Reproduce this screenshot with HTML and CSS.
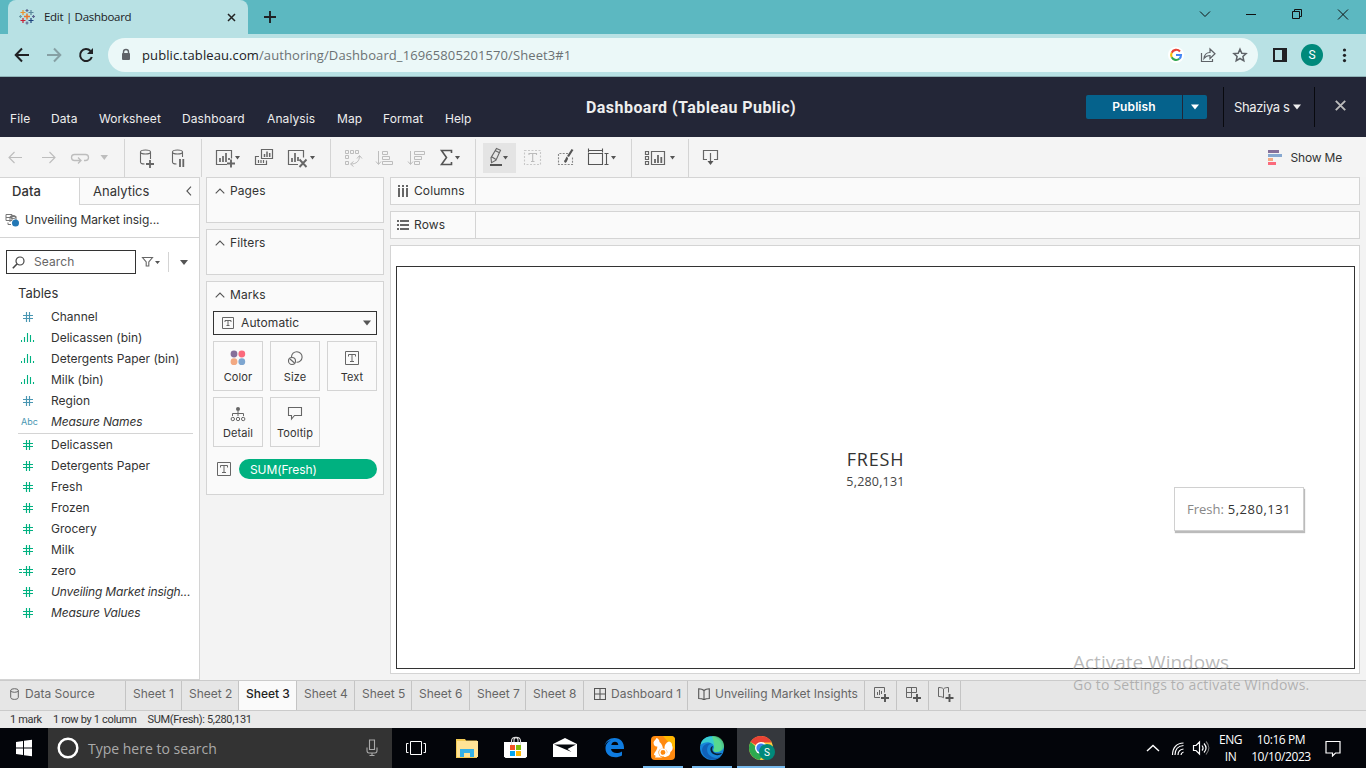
FILE: index.html
```html
<!DOCTYPE html>
<html lang="en">
<head>
<meta charset="utf-8">
<title>Edit | Dashboard</title>
<link rel="stylesheet" href="styles.css">
</head>
<body>
<svg class="defs" width="0" height="0">
  <symbol id="hash" viewBox="0 0 12 12"><path d="M4.500 1v10M7.500 1v10M1 4.500h10M1 7.500h10" fill="none" stroke="currentColor" stroke-width="1.150"/></symbol>
  <symbol id="bars" viewBox="0 0 14 10"><path d="M.5 7v2M3.500 4v5M6.500 0v9M9.500 2v7M12.500 7v2" fill="none" stroke="currentColor" stroke-width="1.100"/></symbol>
  <symbol id="boxt" viewBox="0 0 14 14"><path d="M.5.5h13v13H.5z" fill="none" stroke="#666"/><path d="M3.500 5.500v-2h7v2M7 3.500v7M5 10.500h4" fill="none" stroke="#666"/></symbol>
  <symbol id="chev" viewBox="0 0 10 6"><path d="M.7 5.300 5 1l4.300 4.300" fill="none" stroke="#555" stroke-width="1.100"/></symbol>
</svg>

<header class="browser">
  <div class="tabstrip">
    <div class="tab">
      <svg class="favicon" viewBox="20 9 16 16" width="16" height="16"><g fill="none" stroke-width="1.200"><path d="M28 13.500v6M25 16.500h6" stroke="#e8762d" stroke-width="1.500"/><path d="M24 10v5M21.500 12.500h5" stroke="#eb912c"/><path d="M32 10v5M29.500 12.500h5" stroke="#59879b"/><path d="M24 18v5M21.500 20.500h5" stroke="#c72035"/><path d="M32 18v5M29.500 20.500h5" stroke="#1f447e"/><path d="M28 9v3M26.500 10.500h3M28 21.500v3M26.500 23h3" stroke="#5b6591"/><path d="M21.500 15v3M20 16.500h3" stroke="#7099a6"/><path d="M34.500 15v3M33 16.500h3" stroke="#5b6591"/></g></svg>
      <span class="tab-title">Edit | Dashboard</span>
      <svg viewBox="0 0 9 9" width="9" height="9"><path d="M1 1l7 7M8 1 1 8" stroke="#222" stroke-width="1.500"/></svg>
    </div>
    <svg class="newtab" viewBox="0 0 12 12" width="12" height="12"><path d="M6 0v12M0 6h12" stroke="#202124" stroke-width="1.900"/></svg>
    <svg class="winctl" viewBox="1190 0 176 34" width="176" height="34"><g fill="none" stroke="#111"><path d="M1200 11.500l5 5 5-5M1246 14.500h10M1338 9.500l10 10M1348 9.500l-10 10"/><path d="M1292.500 11.500h7v7h-7zM1294.500 11.500v-2h7v7h-2"/></g></svg>
  </div>
  <div class="addressbar">
    <svg viewBox="0 34 108 42" width="108" height="42"><g fill="none" stroke="#202124" stroke-width="2"><path d="M29 55H16M22 48.500 15.700 55l6.300 6.500"/><path d="M47 55h13M54 48.500l6.300 6.500-6.300 6.500" stroke="#86a0a4"/><path d="M90.500 51a6 6 0 1 0 1.300 6"/></g><path d="M93 48v6h-6z" fill="#202124"/></svg>
    <div class="omnibox">
      <svg viewBox="120 48 12 14" width="12" height="14"><path d="M123.500 54v-2a2.500 2.500 0 0 1 5 0v2" fill="none" stroke="#5f6368" stroke-width="1.400"/><rect x="122" y="53" width="8" height="7" rx="1" fill="#5f6368"/></svg>
      <span class="url">public.tableau.com<span class="path">/authoring/Dashboard_16965805201570/Sheet3#1</span></span>
      <svg class="omni-icons" viewBox="1166 42 86 26" width="86" height="26"><circle cx="1176" cy="55" r="8" fill="#fff"/><g fill="none" stroke-width="2.100"><path d="M1180 51.500a5 5 0 0 0-8.300 1.200" stroke="#ea4335"/><path d="M1171.700 52.700a5 5 0 0 0 0 4.600" stroke="#fbbc05"/><path d="M1171.700 57.300a5 5 0 0 0 7.600 1.500" stroke="#34a853"/><path d="M1176 55h5a5 5 0 0 1-1.700 3.800" stroke="#4285f4"/></g><g fill="none" stroke="#5f6368" stroke-width="1.200"><path d="M1201.500 53v8.500h11V59"/><path d="M1204 58.500c.5-4.500 3-6 6-6v-3.500l5 4.700-5 4.800v-3c-3 0-4.500 1-6 3z"/><path stroke-width="1.500" d="M1240 49.200l1.800 4 4.300.4-3.200 2.900.9 4.300-3.800-2.300-3.800 2.300.9-4.300-3.200-2.900 4.300-.4z"/></g></svg>
    </div>
    <svg viewBox="1258 34 108 42" width="108" height="42"><path d="M1273 48h14v14h-14z" fill="#202124"/><path d="M1275 50h7v10h-7z" fill="#b8e1e4"/><circle cx="1312" cy="55" r="11" fill="#00897b"/><g fill="#202124"><circle cx="1344.500" cy="50" r="1.600"/><circle cx="1344.500" cy="55.300" r="1.600"/><circle cx="1344.500" cy="60.600" r="1.600"/></g><text x="1312" y="59" text-anchor="middle" class="avatar">S</text></svg>
  </div>
</header>

<section class="apphead">
  <nav class="menu"><span class="m1">File</span><span class="m2">Data</span><span class="m3">Worksheet</span><span class="m4">Dashboard</span><span class="m5">Analysis</span><span class="m6">Map</span><span class="m7">Format</span><span class="m8">Help</span></nav>
  <h1>Dashboard (Tableau Public)</h1>
  <div class="account">
    <button class="publish">Publish</button>
    <button class="publish-more"><svg viewBox="0 0 8 6" width="8" height="6"><path d="M0 .5h8L4 5.500z" fill="#fff"/></svg></button>
    <div class="user"><span>Shaziya s</span><svg viewBox="0 0 8 6" width="8" height="6"><path d="M0 .5h8L4 5.500z" fill="#eee"/></svg></div>
    <svg class="close" viewBox="0 0 11 11" width="11" height="11"><path d="M.8.8l9.400 9.400M10.200.8.800 10.200" stroke="#bbb" stroke-width="1.900"/></svg>
  </div>
</section>

<div class="toolbar">
  <svg class="group" viewBox="0 137 124 40" width="124" height="40"><g fill="none" stroke="#bdbdbd" stroke-width="1.100"><path d="M22 157.500H9M14.500 152 9 157.500l5.500 5.500M42 157.500h13M49.500 152l5.500 5.500-5.500 5.500"/><path d="M84 160.500h1.500a3 3 0 0 0 0-6H74.500a3 3 0 0 0 0 6H81M78 157.500l3 3-3 3" stroke-width="1.300"/></g><path d="M100.500 155h7.500l-3.700 5z" fill="#bdbdbd"/></svg>
  <svg class="group" viewBox="125 137 76 40" width="76" height="40"><g fill="none" stroke="#666" stroke-width="1.100"><ellipse cx="145.500" cy="152" rx="5" ry="2"/><path d="M140.500 152v10c0 1.200 1.500 2 4 2M150.500 152v7"/><path d="M150 160v8M146 164h8" stroke-width="1.800"/><ellipse cx="177.500" cy="152" rx="5" ry="2"/><path d="M172.500 152v10c0 1.200 1.500 2 4 2M182.500 152v5"/><path d="M180 159v8M183.300 159v8" stroke-width="1.800"/></g></svg>
  <svg class="group" viewBox="202 137 128 40" width="128" height="40"><g fill="none" stroke="#666" stroke-width="1.200"><path d="M227 164.500h-10.500v-14h15v8"/><path d="M220 158v4M223 156v6M226 153v9M229 158v2" stroke-width="1.700"/><path d="M231 159.500v8M227 163.500h8" stroke-width="1.900"/><path d="M261.500 149.500h11v9h-11zM259 156.500h-3.500v8h11v-4M258.500 160v3M261 160v3M263.500 160v3"/><path d="M264.500 154v3M267 151.500v5.500M269.700 153v4" stroke-width="1.500"/><path d="M298 164.500h-9.500v-14h15v7"/><path d="M292 158v4M295 153v9M298 157v4" stroke-width="1.700"/><path d="M299.500 159.500l7 7.500M306.500 159.500l-7 7.500" stroke-width="1.900"/></g><path d="M235 156h5l-2.500 3.500zM310 156h5l-2.500 3.500z" fill="#555"/></svg>
  <svg class="group" viewBox="331 137 144 40" width="144" height="40"><g fill="none" stroke="#bdbdbd" stroke-width="1"><path d="M345.500 150.500h3v3h-3zM350.500 150.500h3v3h-3zM355.500 150.500h3v3h-3zM345.500 155.500h3v3h-3zM345.500 161.500h3v3h-3z"/><path d="M359.500 156c0 5-3 8-8.500 8M357 158.500l2.500-3 2.500 3M353.500 161.500l-3 2.500 3 2.500"/><path d="M378.500 151v13M376 161.500l2.500 3 2.500-3M382.500 151.500h5v3h-5zM382.500 156.500h7v3h-7zM382.500 161.500h10v3h-10z"/><path d="M410.500 151v13M408 161.500l2.500 3 2.500-3M414.500 151.500h10v3h-10zM414.500 156.500h7v3h-7zM414.500 161.500h5v3h-5z"/></g><path d="M451.500 153v-2.500h-10l5 7-5 7h10V162" fill="none" stroke="#555" stroke-width="1.600"/><path d="M455 156h5l-2.500 3.500z" fill="#555"/></svg>
  <svg class="group" viewBox="476 137 155 40" width="155" height="40"><path d="M483 143h33v30h-33z" fill="#e4e4e4"/><path d="M490 164h12v2h-12zM503 156h5l-2.500 3.500zM611 156h5l-2.500 3.500z" fill="#555"/><g fill="none" stroke="#666" stroke-width="1.100"><path d="M496.500 148.500l4 1.700-4.500 10-4.500 2.500-.5-5zM492 157l4 2.500M495 150.500l4 2"/><path d="M524.500 150.500h16v14h-16z" stroke="#c8c8c8" stroke-dasharray="2 1.500"/><path d="M529 155v-1.500h7.500v1.500M532.700 153.500v8M531 161.500h3.500" stroke="#bbb"/><path d="M568 153.500h-9.500v11h14v-7" stroke="#888" stroke-dasharray="2 1.300"/><path d="M572.500 149.500l-4.500 7" stroke-width="2.200" stroke="#555"/><path d="M567.500 157.500c-1 .5-.5 3-3 4.500" stroke-width="2.400" stroke="#555"/><path d="M588.500 153.500h14v11h-14zM588.500 150.500h14M588.500 148.500v4M602.500 148.500v4M606.500 153.500v11M604.500 153.500h4M604.500 164.500h4" stroke="#555"/></g></svg>
  <svg class="group" viewBox="632 137 56 40" width="56" height="40"><g fill="none" stroke="#666"><path d="M645.500 151.500h3v3h-3zM645.500 156.500h3v3h-3zM645.500 161.500h3v3h-3zM651.500 151.500h13v13h-13z" stroke-width="1.200"/><path d="M655 159v4M658 155v8M661.300 157v6" stroke-width="1.800"/></g><path d="M670 156h5l-2.500 3.500z" fill="#555"/></svg>
  <svg viewBox="689 137 60 40" width="60" height="40"><path d="M707 159.500h-3.500v-9h14v9H714M710.500 153v9" fill="none" stroke="#666" stroke-width="1.200"/><path d="M707.500 161h6l-3 4z" fill="#555"/></svg>
  <div class="showme"><svg viewBox="0 0 14 15" width="14" height="15"><path d="M0 0h11v3H0z" fill="#86709a"/><path d="M0 4h14v3H0z" fill="#87a8d0"/><path d="M0 8h5v3H0z" fill="#f2a983"/><path d="M0 12h8v3H0z" fill="#fb6a7c"/></svg><span>Show Me</span></div>
</div>

<main class="work">
  <aside class="datapane">
    <div class="panetabs"><div class="on">Data</div><div class="off"><span>Analytics</span><svg viewBox="0 0 6 10" width="6" height="10"><path d="M5 .7.9 5 5 9.300" fill="none" stroke="#555" stroke-width="1.100"/></svg></div></div>
    <div class="source"><svg viewBox="0 0 14 14" width="14" height="14"><g fill="none" stroke="#777"><path d="M1 1.500h6v6H1zM1 4.500h6M3 9.500v2h3M5.500 3.500h5.500v5"/><ellipse cx="8" cy="4" rx="3" ry="1.500"/><path d="M5 4v5"/></g><circle cx="10.500" cy="10" r="3.500" fill="#2378b5"/></svg><span>Unveiling Market insig...</span></div>
    <div class="searchrow">
      <div class="search"><svg viewBox="0 0 13 13" width="13" height="13"><circle cx="8" cy="5" r="4" fill="none" stroke="#444" stroke-width="1.200"/><path d="M5 8 .8 12.200" stroke="#444" stroke-width="1.600"/></svg><span>Search</span></div>
      <svg viewBox="136 250 60 24" width="60" height="24"><path d="M142.500 257.500h10l-3.700 4.500v4h-2.600v-4z" fill="none" stroke="#666" stroke-width="1.100"/><path d="M155 261h5l-2.500 3zM180 260h8l-4 5z" fill="#555"/><path d="M168.500 252v20" stroke="#d4d4d4"/></svg>
    </div>
    <div class="tables-label">Tables</div>
    <ul class="fields dims">
      <li class="blue"><svg width="12" height="12"><use href="#hash"/></svg><span>Channel</span></li>
      <li class="bin"><svg width="14" height="10"><use href="#bars"/></svg><span>Delicassen (bin)</span></li>
      <li class="bin"><svg width="14" height="10"><use href="#bars"/></svg><span>Detergents Paper (bin)</span></li>
      <li class="bin"><svg width="14" height="10"><use href="#bars"/></svg><span>Milk (bin)</span></li>
      <li class="blue"><svg width="12" height="12"><use href="#hash"/></svg><span>Region</span></li>
      <li class="blue it"><b>Abc</b><span>Measure Names</span></li>
    </ul>
    <ul class="fields">
      <li><svg width="12" height="12"><use href="#hash"/></svg><span>Delicassen</span></li>
      <li><svg width="12" height="12"><use href="#hash"/></svg><span>Detergents Paper</span></li>
      <li><svg width="12" height="12"><use href="#hash"/></svg><span>Fresh</span></li>
      <li><svg width="12" height="12"><use href="#hash"/></svg><span>Frozen</span></li>
      <li><svg width="12" height="12"><use href="#hash"/></svg><span>Grocery</span></li>
      <li><svg width="12" height="12"><use href="#hash"/></svg><span>Milk</span></li>
      <li class="calc"><svg viewBox="-4 0 16 12" width="16" height="12"><path d="M-3 4.500H0M-3 7.500H0M4.500 1v10M7.500 1v10M1 4.500h10M1 7.500h10" fill="none" stroke="currentColor" stroke-width="1.150"/></svg><span>zero</span></li>
      <li class="it"><svg width="12" height="12"><use href="#hash"/></svg><span>Unveiling Market insigh...</span></li>
      <li class="it"><svg width="12" height="12"><use href="#hash"/></svg><span>Measure Values</span></li>
    </ul>
  </aside>

  <div class="cards">
    <section class="card small"><h2><svg width="10" height="6"><use href="#chev"/></svg>Pages</h2></section>
    <section class="card small"><h2><svg width="10" height="6"><use href="#chev"/></svg>Filters</h2></section>
    <section class="card marks"><h2><svg width="10" height="6"><use href="#chev"/></svg>Marks</h2>
      <div class="marktype"><svg viewBox="0 0 12 12" width="12" height="12"><path d="M.5.5h11v11H.5zM3 5V3.500h6V5M6 3.500v5M4.500 8.500h3" fill="none" stroke="#666"/></svg><span>Automatic</span><svg viewBox="0 0 8 6" width="8" height="6"><path d="M0 .5h8L4 5.500z" fill="#555"/></svg></div>
      <div class="markgrid">
        <div><svg viewBox="0 0 16 16" width="16" height="16"><circle cx="4" cy="4" r="3.400" fill="#86709a"/><circle cx="11.800" cy="4" r="3.400" fill="#fb6a7c"/><circle cx="4" cy="11.700" r="3.400" fill="#f2a983"/><circle cx="11.800" cy="11.700" r="3.400" fill="#7ea6d0"/></svg><span>Color</span></div>
        <div><svg viewBox="0 0 16 16" width="16" height="16"><g fill="none" stroke="#666" stroke-width="1.100"><path d="M4.500 7a5.300 5.300 0 1 1 5 5.300"/><circle cx="5" cy="11" r="3.500"/><path d="M3 9l4.500 4"/></g></svg><span>Size</span></div>
        <div><svg width="14" height="16" viewBox="0 -1 14 16"><use href="#boxt" width="14" height="14"/></svg><span>Text</span></div>
        <div><svg viewBox="0 0 16 16" width="16" height="16"><circle cx="8" cy="3" r="2" fill="#666"/><g fill="none" stroke="#666"><path d="M8 5v5M2.500 10V7.500h11V10"/><circle cx="2.800" cy="13" r="1.700"/><circle cx="8" cy="13" r="1.700"/><circle cx="13.200" cy="13" r="1.700"/></g></svg><span>Detail</span></div>
        <div><svg viewBox="0 0 16 16" width="16" height="16"><path d="M1.500 1.500h13v8h-7l-3 3.500v-3.500h-3z" fill="none" stroke="#666" stroke-width="1.100"/></svg><span>Tooltip</span></div>
      </div>
      <div class="pillrow"><svg width="14" height="14"><use href="#boxt"/></svg><span class="pill">SUM(Fresh)</span></div>
    </section>
  </div>

  <div class="canvas">
    <div class="shelf"><div class="shelfname"><svg viewBox="0 0 12 12" width="12" height="12"><path d="M1 0h2v2H1zM5 0h2v2H5zM9 0h2v2H9zM1 3h2v9H1zM5 3h2v9H5zM9 3h2v9H9z" fill="#666"/></svg><span>Columns</span></div></div>
    <div class="shelf"><div class="shelfname"><svg viewBox="0 0 12 12" width="12" height="12"><path d="M0 1h2v2H0zM0 5h2v2H0zM0 9h2v2H0zM3 1h9v2H3zM3 5h9v2H3zM3 9h9v2H3z" fill="#666"/></svg><span>Rows</span></div></div>
    <div class="view"><div class="viz"><div class="measure">FRESH</div><div class="value">5,280,131</div></div></div>
  </div>
</main>

<nav class="sheets">
  <div class="ds"><svg viewBox="0 0 9 12" width="9" height="12"><g fill="none" stroke="#666"><ellipse cx="4.500" cy="2.500" rx="3.800" ry="1.800"/><path d="M.7 2.500v7c0 2.500 7.600 2.500 7.600 0v-7"/></g></svg><span>Data Source</span></div>
  <div class="s56">Sheet 1</div><div class="s57">Sheet 2</div><div class="s58 current">Sheet 3</div><div class="s58">Sheet 4</div><div class="s57">Sheet 5</div><div class="s58">Sheet 6</div><div class="s56">Sheet 7</div><div class="s58">Sheet 8</div>
  <div class="dash"><svg viewBox="0 0 12 12" width="12" height="12"><path d="M.5.5h11v11H.5zM6 .5v11M.5 6h11" fill="none" stroke="#555" stroke-width="1.100"/></svg><span>Dashboard 1</span></div>
  <div class="story"><svg viewBox="0 0 12 12" width="12" height="12"><path d="M6 2.500C4.500 1 3 .7.700.7v9.800c2.300 0 4 .3 5.300 1.300 1.300-1 3-1.300 5.300-1.300V.7C9 .7 7.500 1 6 2.500v9" fill="none" stroke="#555" stroke-width="1.100"/></svg><span>Unveiling Market Insights</span></div>
  <svg class="add" viewBox="865 681 31 29" width="31" height="29"><path d="M880 697.500h-5.500v-10h10v5M877.500 692v3M879.500 690v5M881.500 691v3" fill="none" stroke="#666"/><path d="M885 694v8M881 698h8" stroke="#555" stroke-width="1.900"/></svg>
  <svg class="add" viewBox="897 681 31 29" width="31" height="29"><path d="M912 697.500h-5.500v-10h10v5M911.500 687.500v10M906.500 692.500h10" fill="none" stroke="#666"/><path d="M917 694v8M913 698h8" stroke="#555" stroke-width="1.900"/></svg>
  <svg class="add" viewBox="929 681 31 29" width="31" height="29"><path d="M944 698c-1-1-3-1.500-5.500-1.500v-9c2.500 0 4 .3 5 1.500 1-1.200 2.500-1.500 5-1.500v5M943.500 689v8" fill="none" stroke="#666"/><path d="M949.500 694v8M945.500 698h8" stroke="#555" stroke-width="1.900"/></svg>
</nav>
<footer class="status"><span>1 mark</span><span>1 row by 1 column</span><span class="sum">SUM(Fresh): 5,280,131</span></footer>

<footer class="taskbar">
  <svg viewBox="0 0 48 40" width="48" height="40"><path d="M16 14l7-1v6.500h-7zM24 12.800l8-1.100v7.800h-8zM16 20.500h7V27l-7-1zM24 20.500h8v7.800l-8-1.100z" fill="#fff"/></svg>
  <div class="wsearch"><svg viewBox="0 0 24 24" width="24" height="24"><circle cx="12" cy="12" r="9.300" fill="none" stroke="#fff" stroke-width="2.500"/></svg><span>Type here to search</span><svg viewBox="0 0 12 18" width="12" height="18"><path d="M3.500 1h5v9.500h-5zM1 8.500v3c0 2 1 2.500 2 2.500h6c1 0 2-.5 2-2.500v-3M6 14v2.500M3.500 16.500h5" fill="none" stroke="#aaa" stroke-width="1.100"/></svg></div>
  <svg class="apps" viewBox="392 728 393 40" width="393" height="40">
    <path d="M737 728h48v40h-48z" fill="#35383d"/>
    <path d="M643 766h40v2h-40zM692 766h40v2h-40zM737 766h48v2h-48z" fill="#76b9ed"/>
    <path d="M410.500 741.500h11v13h-11zM408.500 743.500h-2v9h2M423.500 743.500h2v9h-2" fill="none" stroke="#fff"/>
    <path d="M456 739h9l1 1.500h11v17.500h-21z" fill="#f3cb55"/><path d="M457 741h21v16h-21z" fill="#ffe395"/><path d="M460 749h14v8h-4v-4h-6v4h-4z" fill="#35b1e6"/>
    <path d="M504 742h23v14.500l-1.500 1.500h-20l-1.500-1.500z" fill="#fff"/><path d="M511.500 745v-4c0-5 9-5 9 0v4M514 742v-2c0-3 4-3 4 0v2" fill="none" stroke="#ddd" stroke-width="1.100"/><path d="M510 745h5v5h-5z" fill="#f35325"/><path d="M516 745h5v5h-5z" fill="#81bc06"/><path d="M510 751h5v5h-5z" fill="#05a6f0"/><path d="M516 751h5v5h-5z" fill="#ffba08"/>
    <path d="M553 744l12-6 12 6v13h-24z" fill="#fff"/><path d="M554 744.500h22l-8.500 4.500 4 3z" fill="#05080d"/>
    <path d="M604.500 746c1-5 5-8 10-8 6 0 10 4.500 9.500 11h-13c.5 4 6 5.500 11 2.500v4c-7 4-16.500 1-16.500-7 0-4 2-7 5.500-8-4 .5-5.500 3-6.500 5.500zm6.800-1h7c0-4.500-6.500-4.500-7 0z" fill="#0f7ce0" fill-rule="evenodd"/>
    <rect x="651" y="736" width="24" height="24" rx="4" fill="#ff8a10"/><path d="M663 736h8a4 4 0 0 1 4 4v10z" fill="#ffb800"/><path d="M653.500 742.500c.5-2 2.300-2.500 3-4.500 1.700.6 3 2 3 4 2.500 2 3.200 4 3.500 7-2.500-1-5 1-4.500 4 .3 2.500 2 4 4 4.500H655c1-1.500.7-2.500-1-2.500 0-3 3.500-4.500 3.300-8.500-2 .5-3.800-1-3.800-4z" fill="#fff"/><path d="M664 757c4.500 0 6.500-2.500 6.300-5 2.200-1.500 3.200-4 1.700-6.500.3-2-1-3.500-3-4-3 1-5 4-4.300 7.500 2 .5 3 2 2.500 3.800-.5 1.500-2.200 2.200-3.700 1.700z" fill="#fff"/><circle cx="663" cy="752.500" r="3.200" fill="none" stroke="#fff" stroke-width="1.500"/>
    <circle cx="712" cy="748" r="12" fill="#1684d8"/><path d="M700.500 745c2-9 12-11 18.500-5 5 6 3 12-2 12-4 0-4-2-3-4 1-6-9-8-13.500-3z" fill="#39cdd0"/><path d="M712 736c8-1 13 6 12 11-1 4-5 5-8 5-3 0-3-2-2-4 1-4-1-8-2-12z" fill="#62dc78" opacity=".75"/><path d="M711 743.500c-5 2-5 9-1 12 3 3 8 3 11 1-6 6-18 3-19-6 0-5 5-8 9-7z" fill="#1061b8"/><path d="M713 746c-3 6 3 9 8 7l1 .5c-5 4-12.500 0-11.500-5 .2-1.500 1.500-2.500 2.500-2.500z" fill="#0b2038"/>
    <circle cx="761" cy="748" r="12" fill="#ffcd40"/><path d="M761 748l-10.400-6a12 12 0 0 1 21 .5h-10.600z" fill="#e94335"/><path d="M750.600 742a12 12 0 0 0 9 17.900l4-6.500z" fill="#2da94f"/><circle cx="761" cy="748" r="6" fill="#fff"/><circle cx="761" cy="748" r="4.600" fill="#3e7ff0"/><circle cx="767" cy="752" r="8" fill="#00897b"/><text x="767" y="755.500" text-anchor="middle" class="badge">S</text>
  </svg>
  <svg class="tray" viewBox="1140 728 75 40" width="75" height="40"><g fill="none" stroke="#fff" stroke-width="1.200"><path d="M1147 751l6-5.500 6 5.500" stroke-width="1.400"/><path d="M1172.500 755c0-7 4-12 11-12M1175 755c0-5.500 3-9 8.500-9.500M1178 755c0-3.500 2-5.500 5.500-6M1181 755c0-1.500 1-2.500 2.500-3"/><path d="M1193.500 745.500h2.500l3.500-3.500v12l-3.500-3.500h-2.500zM1202 745.500c1.500 2 1.500 3.500 0 5M1204 743.500c3 3.500 3 6 0 9"/><path d="M1206 741.500c4 4.500 4 8 0 13" stroke="#777"/></g></svg>
  <div class="lang">ENG<br>IN</div>
  <div class="clock">10:16 PM<br>10/10/2023</div>
  <svg class="notif" viewBox="0 0 16 17" width="16" height="17"><path d="M1 1.500h14v11.500h-4.500l-3 3v-3H1z" fill="none" stroke="#fff" stroke-width="1.200"/></svg>
</footer>

<div class="tip"><span>Fresh:</span> 5,280,131</div>
<div class="watermark"><div class="w1">Activate Windows</div><div class="w2">Go to Settings to activate Windows.</div></div>
</body>
</html>
```
FILE: styles.css
```css
* { box-sizing: border-box; }
body { margin: 0; width: 1366px; height: 768px; overflow: hidden; display: flex; flex-direction: column; background: #f3f3f3; font: 12px/16px Inter, Roboto, "Liberation Sans", sans-serif; color: #333; letter-spacing: .1px; }
svg { flex: none; display: block; }
.defs { position: absolute; }
h1, h2, ul { margin: 0; padding: 0; font-size: inherit; font-weight: inherit; }
button { border: 0; padding: 0; font: inherit; color: inherit; letter-spacing: inherit; }

.browser { height: 77px; flex: none; background: #b8e1e4; border-bottom: 1px solid #8fb3b7; font-family: "Open Sans", "Noto Sans", sans-serif; letter-spacing: 0; }
.tabstrip { height: 34px; background: #5cb8c1; display: flex; align-items: center; padding-left: 8px; }
.tab { width: 240px; height: 34px; background: #b8e1e4; border-radius: 8px 8px 0 0; display: flex; align-items: center; padding: 0 12px 0 11px; font-size: 11.5px; color: #202124; }
.tab-title { margin-left: 9px; flex: 1; letter-spacing: -.3px; }
.newtab { margin-left: 16px; }
.winctl { margin-left: auto; }
.addressbar { display: flex; height: 42px; align-items: center; }
.omnibox { flex: 1; height: 34px; border-radius: 17px; background: #ebf8f8; display: flex; align-items: center; padding: 0 6px 0 12px; }
.url { margin-left: 10px; font-size: 13px; letter-spacing: .1px; color: #202124; white-space: nowrap; }
.path { color: #6b7274; }
.omni-icons { margin-left: auto; }
.avatar { font: 12px Roboto, sans-serif; fill: #fff; }
.badge { font: 10px Roboto, sans-serif; fill: #fff; }

.apphead { height: 60px; flex: none; background: #232637; color: #eee; display: grid; grid-template-columns: 586px 500px 1fr; }
.menu { display: flex; align-items: flex-end; padding: 0 0 10px 10px; }
.menu span { flex: none; }
.m1 { width: 41px; } .m2 { width: 48px; } .m3 { width: 83px; } .m4 { width: 85px; } .m5 { width: 70px; } .m6 { width: 46px; } .m7 { width: 62px; }
.apphead h1 { font-family: Roboto, sans-serif; font-size: 16px; font-weight: 700; align-self: center; letter-spacing: .45px; padding-top: 2px; }
.account { display: flex; align-items: center; }
.publish, .publish-more { height: 24px; background: #05628c; color: #fff; font-weight: 600; }
.publish { width: 96px; border-radius: 2px 0 0 2px; margin-right: 1px; }
.publish-more { width: 24px; border-radius: 0 2px 2px 0; display: flex; align-items: center; justify-content: center; }
.user { margin-left: 16px; width: 92px; height: 40px; border: solid #08090e; border-width: 0 1px; display: flex; align-items: center; gap: 3px; padding: 0 0 0 10px; white-space: nowrap; font-size: 13px; letter-spacing: -.35px; }
.close { margin: -3px 0 0 20px; }

.toolbar { height: 40px; flex: none; background: #f4f4f4; display: flex; }
.toolbar .group { box-sizing: content-box; border-right: 1px solid; height: 40px; border-image: linear-gradient(transparent 3px, #d4d4d4 3px) 1; }
.showme { margin-left: auto; display: flex; align-items: center; gap: 9px; padding: 1px 24px 0 0; letter-spacing: -.2px; }

.work { height: 503px; flex: none; display: flex; }
.datapane { width: 200px; height: 503px; background: #fff; border: solid #d4d4d4; border-width: 1px 1px 1px 0; }
.panetabs { display: flex; height: 27px; font-size: 13px; }
.on { width: 79px; padding: 5px 0 0 12px; font-weight: 500; }
.off { flex: 1; background: #fafafa; border: solid #d4d4d4; border-width: 0 0 1px 1px; display: flex; align-items: center; justify-content: space-between; padding: 0 7px 0 13px; letter-spacing: 0; }
.source { height: 33px; border-bottom: 1px solid #d4d4d4; display: flex; align-items: center; gap: 6px; padding: 0 0 3px 5px; letter-spacing: -.05px; }
.searchrow { display: flex; padding: 12px 0 0 6px; }
.search { width: 130px; height: 24px; border: 1px solid #333; display: flex; align-items: center; gap: 9px; padding-left: 5px; color: #666; }
.tables-label { padding: 11px 0 0 18px; font-size: 13px; height: 32px; letter-spacing: 0; }
.fields { list-style: none; letter-spacing: 0; }
.fields li { height: 21px; display: flex; align-items: center; padding-left: 22px; color: #00b180; white-space: nowrap; }
.fields li > :first-child { margin-right: 17px; }
.fields li.bin > :first-child { margin-right: 16px; }
.fields li.bin { padding-left: 21px; }
.fields li.calc { padding-left: 18px; }
.fields span { color: #333; }
.fields .blue { color: #4996b2; }
.fields .it span { font-style: italic; letter-spacing: -.15px; }
.fields b { font-size: 9px; font-weight: 400; margin-left: -1px; width: 30px; margin-right: 0 !important; }
.dims { margin: 0 6px 0 0; }
.dims::after { content: ""; display: block; margin-left: 18px; height: 1px; border-bottom: 1px solid #d4d4d4; }

.cards { margin-left: 6px; width: 178px; display: flex; flex-direction: column; gap: 6px; }
.card { background: #fafafa; border: 1px solid #d4d4d4; }
.small { height: 46px; }
.marks { height: 214px; padding: 0 6px; }
.card h2 { height: 26px; display: flex; align-items: center; gap: 5px; padding-left: 8px; }
.marks h2 { padding-left: 2px; }
.marktype { height: 24px; margin-top: 3px; border: 1px solid #333; display: flex; align-items: center; padding: 0 5px 0 8px; gap: 7px; }
.marktype span { flex: 1; }
.markgrid { margin-top: 6px; display: grid; grid-template-columns: repeat(3, 50px); gap: 6px 7px; font-size: 11px; letter-spacing: .1px; }
.markgrid div { height: 50px; border: 1px solid #d4d4d4; display: flex; flex-direction: column; align-items: center; padding-top: 8px; gap: 3px; }
.pillrow { display: flex; align-items: center; margin-top: 12px; gap: 8px; padding-left: 4px; }
.pill { width: 138px; height: 20px; border-radius: 10px; background: #00b180; color: #fff; padding: 3px 0 0 11px; letter-spacing: -.1px; }

.canvas { margin-left: 6px; width: 970px; display: flex; flex-direction: column; gap: 6px; }
.shelf { height: 28px; flex: none; background: #fafafa; border: 1px solid #d4d4d4; }
.shelfname { width: 85px; height: 26px; border-right: 1px solid #d4d4d4; display: flex; align-items: center; gap: 5px; padding-left: 6px; }
.view { height: 429px; background: #fff; border: 1px solid #d4d4d4; padding: 20px 4px 4px 5px; }
.viz { height: 403px; border: 1px solid #333; text-align: center; padding-top: 180px; font-family: "Open Sans", "Noto Sans", sans-serif; }
.measure { font-size: 18px; line-height: 24px; letter-spacing: .8px; }
.value { font-size: 12.5px; line-height: 21px; color: #444; letter-spacing: .2px; }

.sheets { height: 31px; flex: none; background: #e6e6e6; border: solid #cbcbcb; border-width: 1px 0; display: flex; color: #666; letter-spacing: 0; }
.sheets > * { border-right: 1px solid #c4c4c4; height: 29px; white-space: nowrap; }
.sheets > div { padding: 5px 0 0 7px; }
.sheets > div.ds, .sheets > div.dash, .sheets > div.story { display: flex; align-items: center; padding-top: 0; padding-bottom: 3px; }
.sheets > div.ds { width: 126px; padding-left: 10px; gap: 6px; }
.s56 { width: 56px; } .s57 { width: 57px; } .s58 { width: 58px; }
.dash { width: 104px; gap: 5px; } .story { width: 177px; gap: 5px; }
.sheets > div.dash, .sheets > div.story { padding-left: 10px; }
.sheets > .current { background: #fafafa; color: #222; font-weight: 500; }
.add { box-sizing: content-box; }
.status { height: 17px; flex: none; background: #eaeaea; display: flex; gap: 11px; padding: 1px 0 0 10px; font: 11px/16px Roboto, sans-serif; letter-spacing: -.33px; }

.taskbar { height: 40px; flex: none; background: #03050a; display: flex; color: #fff; font-family: "Open Sans", "Noto Sans", sans-serif; letter-spacing: 0; }
.wsearch { width: 344px; background: #333; display: flex; align-items: center; padding: 0 14px 0 8px; font-size: 14px; color: #aaa; }
.wsearch span { flex: 1; margin-left: 8px; padding-top: 2px; }
.tray { margin-left: auto; }
.lang, .clock { font-size: 12px; text-align: center; padding-top: 3px; line-height: 17px; letter-spacing: -.4px; }
.lang { width: 31px; }
.clock { width: 70px; }
.notif { margin: 12px 25px 0 9px; }

.tip { position: absolute; left: 1174px; top: 487px; width: 130px; height: 44px; background: #fff; border: 1px solid #d0d0d0; box-shadow: 1px 2px 1px #bbb; padding: 13px 0 0 12px; font: 13px/16px "Open Sans", "Noto Sans", sans-serif; letter-spacing: .5px; white-space: nowrap; }
.tip span { color: #888; letter-spacing: 0; }
.watermark { position: absolute; left: 1073px; top: 649px; color: rgba(140, 140, 140, .6); font-family: "Open Sans", "Noto Sans", sans-serif; letter-spacing: 0; white-space: nowrap; }
.w1 { font-size: 19px; line-height: 26px; }
.w2 { font-size: 14px; line-height: 20px; letter-spacing: .2px; }
```
